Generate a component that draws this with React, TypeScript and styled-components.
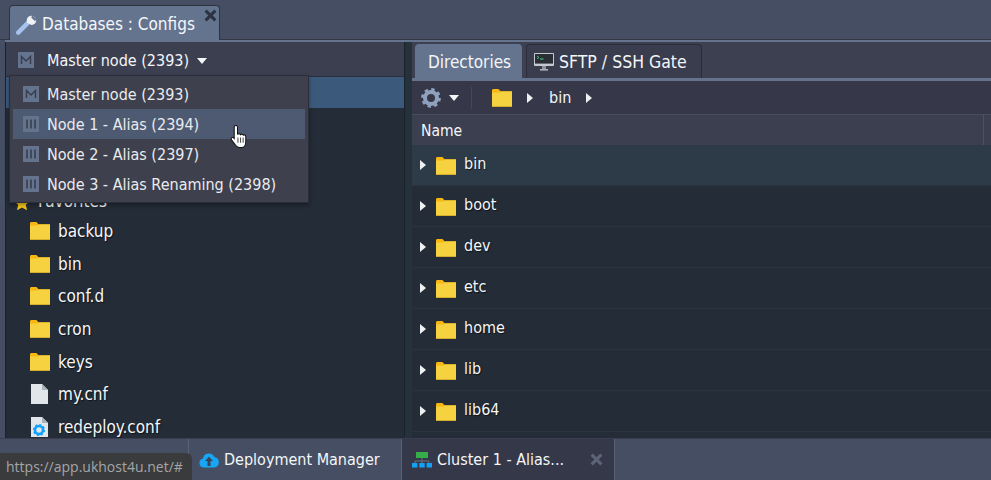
import React from "react";
import styled, { createGlobalStyle } from "styled-components";

const Global = createGlobalStyle`
  html, body { margin: 0; padding: 0; background: #454e62; }
  * { box-sizing: border-box; }
`;

const Page = styled.div`
  position: relative;
  width: 991px;
  height: 480px;
  overflow: hidden;
  display: flex;
  flex-direction: column;
  background: #454e62;
  font-family: "DejaVu Sans Condensed", "DejaVu Sans", sans-serif;
  font-stretch: condensed;
  font-size: 16px;
  color: #f4f6f8;
`;

const TopBar = styled.div`
  height: 40px;
  flex: none;
  padding: 5px 0 0 9px;
  display: flex;
  background: #454e62;
  border-bottom: 1px solid #343845;
`;

const MainTab = styled.div`
  position: relative;
  width: 211px;
  height: 35px;
  display: flex;
  align-items: center;
  gap: 4px;
  padding: 2px 0 0 6px;
  background: #64748f;
  border: 1px solid #2f3340;
  border-bottom: none;
  border-radius: 4px 4px 0 0;
  font-size: 17px;
`;

const CloseMark = styled.span`
  position: absolute;
  right: 2px;
  top: 3px;
  display: flex;
`;

const Main = styled.div`
  flex: 1;
  min-height: 0;
  display: flex;
  margin-left: 5px;
  border-top: 2px solid #64748f;
  background: #252f3a;
`;

const LeftPane = styled.div`
  width: 399px;
  flex: none;
  display: flex;
  flex-direction: column;
  background: #232c37;
  border-left: 1px solid #1c222b;
`;

const NodeHeader = styled.div`
  height: 35px;
  flex: none;
  display: flex;
  align-items: center;
  padding: 2px 0 0 12px;
  gap: 13px;
  background: #3c3f50;
  border-bottom: 1px solid #2c2f3c;
`;

const Caret = styled.span`
  display: inline-block;
  width: 0;
  height: 0;
  margin-left: 8px;
  vertical-align: middle;
  border-left: 5px solid transparent;
  border-right: 5px solid transparent;
  border-top: 6px solid #f4f6f8;
`;

const SelectedRow = styled.div`
  height: 31px;
  flex: none;
  background: #3b5a7b;
`;

const TreeRowsTop = styled.div`
  height: 107px;
  flex: none;
  display: flex;
  align-items: flex-end;
  padding: 0 0 4px 8px;
  gap: 8px;
`;

const TreeList = styled.div`
  display: flex;
  flex-direction: column;
`;

const TreeItem = styled.div`
  height: 32.6px;
  display: flex;
  align-items: center;
  gap: 8px;
  padding-left: 24px;
  font-size: 17px;
  text-shadow: 1px 1px 1px rgba(0, 0, 0, 0.55);
`;

const Divider = styled.div`
  width: 8px;
  flex: none;
  background: #25313b;
  border-left: 1px solid #1c222b;
`;

const RightPane = styled.div`
  flex: 1;
  min-width: 0;
  display: flex;
  flex-direction: column;
  background: #232c37;
`;

const SubTabs = styled.div`
  height: 36px;
  flex: none;
  display: flex;
  align-items: flex-end;
  gap: 4px;
  padding-left: 3px;
  background: #3d4051;
`;

const SubTab = styled.div<{ $active?: boolean; $w: number }>`
  width: ${(p) => p.$w}px;
  height: 34px;
  display: flex;
  align-items: center;
  gap: 5px;
  padding-left: ${(p) => (p.$active ? 12 : 7)}px;
  font-size: ${(p) => (p.$active ? 17 : 17.5)}px;
  white-space: nowrap;
  border-radius: 4px 4px 0 0;
  border: 1px solid ${(p) => (p.$active ? "#64748f" : "#2b2e3a")};
  border-bottom: none;
  background: ${(p) => (p.$active ? "#64748f" : "#3a3d4e")};
`;

const BlueLine = styled.div`
  height: 3px;
  flex: none;
  background: #64748f;
`;

const Toolbar = styled.div`
  height: 34px;
  flex: none;
  display: flex;
  align-items: center;
  background: #363849;
  border-bottom: 1px solid #4a4c5e;
  padding-left: 9px;
`;

const ToolDivider = styled.span`
  width: 1px;
  height: 22px;
  margin: 0 20px 0 12px;
  background: #44475a;
`;

const Crumb = styled.span`
  display: flex;
  margin: 0 16px 0 15px;
`;

const Arrow = styled.span`
  display: inline-block;
  width: 0;
  height: 0;
  border-top: 5px solid transparent;
  border-bottom: 5px solid transparent;
  border-left: 6px solid #eef0f2;
`;

const NameHeader = styled.div`
  height: 30px;
  flex: none;
  display: flex;
  align-items: center;
  justify-content: space-between;
  padding-left: 9px;
  background: #3c3f50;
  font-size: 15.5px;
`;

const NameLabel = styled.span`
  padding-top: 2px;
`;

const HeaderEdge = styled.span`
  width: 1px;
  height: 100%;
  margin-right: 7px;
  background: #4e5163;
`;

const Row = styled.div<{ $hover?: boolean }>`
  height: 41px;
  flex: none;
  display: flex;
  align-items: center;
  padding: 0 0 4px 8px;
  gap: 8px;
  background: ${(p) => (p.$hover ? "#2d3b49" : "#232c37")};
  border-bottom: 1px solid #2a333f;
  font-size: 16px;
  text-shadow: 1px 1px 1px rgba(0, 0, 0, 0.55);
`;

const RowArrow = styled(Arrow)`
  margin: 4px 2px 0 0;
`;

const RowIcon = styled.span`
  display: flex;
  margin-top: 6px;
`;

const BottomBar = styled.div`
  height: 42px;
  flex: none;
  display: flex;
  padding-left: 188px;
  background: #454e62;
  border-top: 1px solid #393d4d;
`;

const TaskTab = styled.div<{ $active?: boolean }>`
  width: ${(p) => (p.$active ? 214 : 213)}px;
  display: flex;
  align-items: center;
  padding: 0 0 0 10px;
  gap: 5px;
  font-size: 16px;
  white-space: nowrap;
  border-left: 1px solid #5a6275;
  border-right: ${(p) => (p.$active ? "1px solid #5a6275" : "none")};
  background: ${(p) => (p.$active ? "#353849" : "transparent")};
`;

const TaskClose = styled.span`
  margin-left: auto;
  margin-right: 11px;
  display: flex;
`;

const Menu = styled.div`
  position: absolute;
  left: 9px;
  top: 75px;
  width: 300px;
  height: 128px;
  padding: 3px;
  display: flex;
  flex-direction: column;
  background: #3e404e;
  border: 1px solid #2b2d38;
  box-shadow: 0 2px 4px rgba(0, 0, 0, 0.35);
`;

const MenuItem = styled.div<{ $hover?: boolean }>`
  height: 30px;
  flex: none;
  display: flex;
  align-items: center;
  gap: 8px;
  padding-left: 10px;
  background: ${(p) => (p.$hover ? "#4d5a72" : "transparent")};
  color: #e9ebee;
`;

const Favorites = styled.span`
  font-size: 17px;
`;

const Status = styled.div`
  position: absolute;
  left: 0;
  bottom: 0;
  height: 27px;
  width: 192px;
  display: flex;
  align-items: center;
  padding-left: 6px;
  background: #3a3b3d;
  border-radius: 0 6px 0 0;
  color: #a3a6a9;
  font-size: 14px;
  font-family: "Open Sans", sans-serif;
  font-stretch: normal;
`;

const Pointer = styled.svg`
  position: absolute;
  left: 230px;
  top: 124px;
`;

const Folder = () => (
  <svg width="20" height="18" viewBox="0 0 20 18">
    <path d="M0 1.500C0 .7.6 0 1.400 0h5l2.200 2.200H20V6H0z" fill="#f9b70f" />
    <path d="M0 3.500h7.500l1.500-1H20V16.500c0 .8-.6 1.500-1.500 1.500h-17C.6 18 0 17.300 0 16.500z" fill="#f6d240" />
    <rect y="17" width="20" height="1" fill="#d6ae2e" />
  </svg>
);

const FileIcon = ({ gear }: { gear?: boolean }) => (
  <svg width="20" height="20" viewBox="0 0 20 20">
    <path d="M1 0h11l6 6v14H1z" fill="#e1e6ea" />
    <path d="M12 0l6 6h-6z" fill="#a9b1ba" />
    {gear && (
      <g>
        <circle cx="9" cy="13" r="4" fill="none" stroke="#10a0ff" strokeWidth="2.600" />
        <circle cx="9" cy="13" r="5.400" fill="none" stroke="#10a0ff" strokeWidth="1.400" strokeDasharray="2 2.200" />
      </g>
    )}
  </svg>
);

const NodeIcon = ({ kind }: { kind: "m" | "n" }) => (
  <svg width="16" height="16" viewBox="0 0 16 16">
    <rect width="16" height="16" fill="#64748f" />
    {kind === "m" ? (
      <path d="M3.500 12V4.500L8 9l4.500-4.500V12" fill="none" stroke="#3a3d4c" strokeWidth="1.500" />
    ) : (
      <path d="M4 3.500v9M8 3.500v9M12 3.500v9" fill="none" stroke="#3a3d4c" strokeWidth="1.600" />
    )}
  </svg>
);

const Cross = ({ color, size }: { color: string; size: number }) => (
  <svg width={size} height={size} viewBox="0 0 12 12">
    <path d="M1.500 1.500l9 9M10.500 1.500l-9 9" stroke={color} strokeWidth="2.800" fill="none" />
  </svg>
);

const Wrench = () => (
  <svg width="22" height="22" viewBox="0 0 22 22">
    <path d="M2.200 19.600l9.200-9.200" stroke="#a5c3ec" strokeWidth="4.400" strokeLinecap="round" fill="none" />
    <path d="M13.200 3.300a5 5 0 0 1 7 4.700c-.3 2.800-3.200 4.600-6 3.600L11 9.400c-.8-2.600.1-5 2.200-6.100z" fill="#eef2f6" />
    <path d="M16.300 2.400l4.400 4-1.900 1.600-3.600-3.400z" fill="#64748f" />
  </svg>
);

const Gear = () => (
  <svg width="20" height="20" viewBox="0 0 20 20">
    <circle cx="10" cy="10" r="6" fill="none" stroke="#8fa1bd" strokeWidth="4" />
    <circle cx="10" cy="10" r="8.600" fill="none" stroke="#8fa1bd" strokeWidth="2.600" strokeDasharray="3.400 3.350" />
  </svg>
);

const Monitor = () => (
  <svg width="20" height="20" viewBox="0 0 20 20">
    <rect x="0" y="1" width="20" height="13" rx="1" fill="#c5cad0" />
    <rect x="1" y="2" width="18" height="9.600" fill="#2a2f36" />
    <path d="M3 4l2 1.400L3 6.800" stroke="#3fce7c" strokeWidth="0.900" fill="none" />
    <path d="M6 7h3.600" stroke="#3fce7c" strokeWidth="1" />
    <rect x="8" y="14" width="4" height="3" fill="#8d929a" />
    <rect x="6" y="17" width="8" height="1.600" fill="#aeb3ba" />
  </svg>
);

const Cloud = () => (
  <svg width="20" height="16" viewBox="0 0 20 16">
    <path d="M5 15.500a4.500 4.500 0 0 1-1-8.900A6 6 0 0 1 15.400 5a5.300 5.300 0 0 1-.4 10.500z" fill="#17a5f5" />
    <path d="M10 4.800l4 4.200h-2.500v5h-3V9H6z" fill="#3a4256" />
  </svg>
);

const ClusterIcon = () => (
  <svg width="20" height="16" viewBox="0 0 20 16">
    <rect x="4" y="0" width="12" height="6" fill="#35ad49" />
    <path d="M10 6v3M3 11V9h14v2M10 9v2" stroke="#6b7284" strokeWidth="1" fill="none" />
    <rect x="0" y="11" width="5.400" height="4.500" fill="#12a2f5" />
    <rect x="7.300" y="11" width="5.400" height="4.500" fill="#12a2f5" />
    <rect x="14.600" y="11" width="5.400" height="4.500" fill="#12a2f5" />
  </svg>
);

const Star = () => (
  <svg width="16" height="16" viewBox="0 0 16 16">
    <path d="M8 0l2.400 5.300 5.600.6-4.200 3.800 1.200 5.600L8 12.500l-5 2.800 1.200-5.600L0 5.900l5.600-.6z" fill="#f6c51c" />
  </svg>
);

const favorites: { name: string; kind: "folder" | "file" | "conf" }[] = [
  { name: "backup", kind: "folder" },
  { name: "bin", kind: "folder" },
  { name: "conf.d", kind: "folder" },
  { name: "cron", kind: "folder" },
  { name: "keys", kind: "folder" },
  { name: "my.cnf", kind: "file" },
  { name: "redeploy.conf", kind: "conf" },
];

const directories = ["bin", "boot", "dev", "etc", "home", "lib", "lib64"];

const menu: { label: string; kind: "m" | "n"; hover?: boolean }[] = [
  { label: "Master node (2393)", kind: "m" },
  { label: "Node 1 - Alias (2394)", kind: "n", hover: true },
  { label: "Node 2 - Alias (2397)", kind: "n" },
  { label: "Node 3 - Alias Renaming (2398)", kind: "n" },
];

export default function App() {
  return (
    <Page>
      <Global />
      <TopBar>
        <MainTab>
          <Wrench />
          Databases : Configs
          <CloseMark>
            <Cross color="#2b3240" size={13} />
          </CloseMark>
        </MainTab>
      </TopBar>
      <Main>
        <LeftPane>
          <NodeHeader>
            <NodeIcon kind="m" />
            <span>
              Master node (2393)
              <Caret />
            </span>
          </NodeHeader>
          <SelectedRow />
          <TreeRowsTop>
            <Star />
            <Favorites>Favorites</Favorites>
          </TreeRowsTop>
          <TreeList>
            {favorites.map((f) => (
              <TreeItem key={f.name}>
                {f.kind === "folder" ? <Folder /> : <FileIcon gear={f.kind === "conf"} />}
                {f.name}
              </TreeItem>
            ))}
          </TreeList>
        </LeftPane>
        <Divider />
        <RightPane>
          <SubTabs>
            <SubTab $active $w={107}>Directories</SubTab>
            <SubTab $w={176}>
              <Monitor />
              SFTP / SSH Gate
            </SubTab>
          </SubTabs>
          <BlueLine />
          <Toolbar>
            <Gear />
            <Caret />
            <ToolDivider />
            <Folder />
            <Crumb>
              <Arrow />
            </Crumb>
            <span>bin</span>
            <Crumb>
              <Arrow />
            </Crumb>
          </Toolbar>
          <NameHeader>
            <NameLabel>Name</NameLabel>
            <HeaderEdge />
          </NameHeader>
          {directories.map((d, i) => (
            <Row key={d} $hover={i === 0}>
              <RowArrow />
              <RowIcon>
                <Folder />
              </RowIcon>
              {d}
            </Row>
          ))}
        </RightPane>
      </Main>
      <BottomBar>
        <TaskTab>
          <Cloud />
          Deployment Manager
        </TaskTab>
        <TaskTab $active>
          <ClusterIcon />
          Cluster 1 - Alias...
          <TaskClose>
            <Cross color="#5d6475" size={13} />
          </TaskClose>
        </TaskTab>
      </BottomBar>
      <Menu>
        {menu.map((m) => (
          <MenuItem key={m.label} $hover={m.hover}>
            <NodeIcon kind={m.kind} />
            {m.label}
          </MenuItem>
        ))}
      </Menu>
      <Status>https://app.ukhost4u.net/#</Status>
      <Pointer width="18" height="25" viewBox="0 0 16 24">
        <path
          d="M5 1.500c1 0 1.600.7 1.600 1.700V10c.5-1 2.400-1 2.800.2.7-.8 2.300-.6 2.700.5.8-.5 2.400-.2 2.400 1.300v5c0 2.800-1.400 5.500-4 5.500H8c-2 0-3-1.500-4-3L1 15.500c-.8-1-.6-2 .2-2.400.8-.4 1.600 0 2.200.8V3.200C3.400 2.200 4 1.500 5 1.500z"
          fill="#fff"
          stroke="#111"
          strokeWidth="1"
        />
        <path d="M7 13v5M9.500 13v5M12 13v5" stroke="#222" strokeWidth="0.800" />
      </Pointer>
    </Page>
  );
}
